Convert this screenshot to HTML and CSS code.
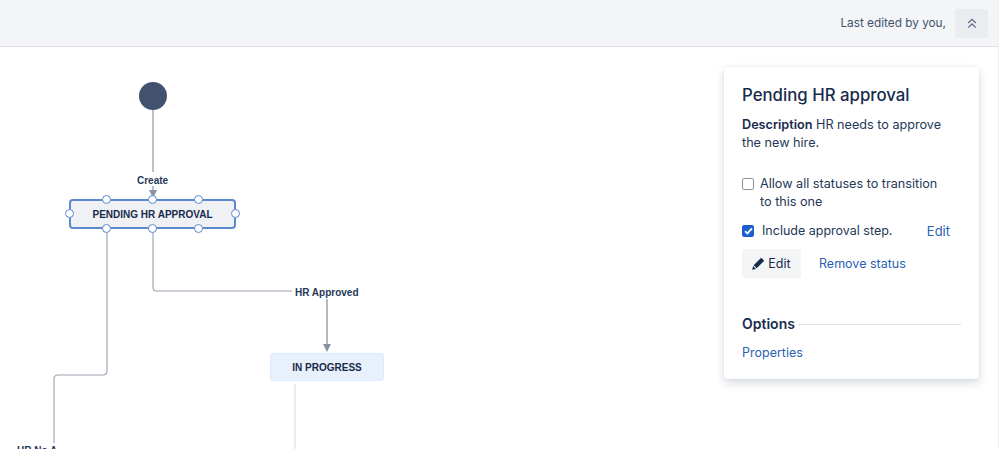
FILE: index.html
```html
<!DOCTYPE html>
<html lang="en">
<head>
<meta charset="utf-8">
<title>Workflow</title>
<link rel="stylesheet" href="styles.css">
</head>
<body>
<header class="topbar">
  <span class="edited">Last edited by you,</span>
  <button class="collapse" aria-label="Collapse">
    <svg width="10" height="11" viewBox="0 0 10 11" fill="none" stroke="#5e6c84" stroke-width="1.3"><path d="M1.2 5 5 1.4 8.8 5M1.2 9.6 5 6 8.8 9.6"/></svg>
  </button>
</header>
<main class="canvas">
  <svg class="wires" width="999" height="402" viewBox="0 47 999 402" fill="none">
    <path class="wire" d="M153 109V172"/>
    <path class="wire" d="M153 186V192"/>
    <path class="head" d="M149 190H157L153 198Z"/>
    <path class="wire thin" d="M153 228V287.500Q153 291 156.500 291H292"/>
    <path class="wire bold" d="M327 299V345"/>
    <path class="head" d="M323 344H331L327 352Z"/>
    <path class="wire thin" d="M107 228V371Q107 375 103 375H58Q54 375 54 379V443"/>
    <path class="wire pale" d="M295 384V449"/>
  </svg>
  <div class="start"></div>
  <span class="label create">Create</span>
  <span class="label approved">HR Approved</span>
  <span class="label rejected">HR No A</span>
  <div class="status selected">PENDING HR APPROVAL
    <i class="handle h1"></i><i class="handle h2"></i><i class="handle h3"></i>
    <i class="handle h4"></i><i class="handle h5"></i><i class="handle h6"></i>
    <i class="handle h7"></i><i class="handle h8"></i>
  </div>
  <div class="status progress">IN PROGRESS</div>

  <aside class="panel">
    <h2 class="title">Pending HR approval</h2>
    <p class="desc"><b>Description</b> HR needs to approve the new hire.</p>
    <label class="check-row first">
      <span class="box"></span>
      <span>Allow all statuses to transition to this one</span>
    </label>
    <div class="check-row second">
      <span class="box on">
        <svg width="9" height="8" viewBox="0 0 9 8" fill="none" stroke="#fff" stroke-width="1.8"><path d="M1 4.200 3.400 6.400 8 1.400"/></svg>
      </span>
      <span class="step">Include approval step.</span>
      <a class="link edit-link" href="#">Edit</a>
    </div>
    <div class="actions">
      <button class="edit">
        <svg width="13" height="13" viewBox="0 0 13 13" fill="#172b4d"><path d="M9.200.8 12.200 3.800 4.700 11.300 1.700 8.300ZM1.100 9 4 11.900.2 12.800Z"/></svg>
        Edit
      </button>
      <a class="link" href="#">Remove status</a>
    </div>
    <div class="options"><h3>Options</h3><span class="rule"></span></div>
    <a class="link" href="#">Properties</a>
  </aside>
</main>
</body>
</html>
```

FILE: styles.css
```css
* { box-sizing: border-box; }
html, body { margin: 0; height: 100%; overflow: hidden; }
body {
  background: #fff;
  font-family: Inter, "Liberation Sans", sans-serif;
  color: #253858;
  font-size: 12.500px;
  border-right: 1px solid #f1f2f4;
}
.topbar {
  height: 47px;
  background: #f4f5f7;
  border-bottom: 1px solid #dfe1e6;
  display: flex;
  align-items: center;
  justify-content: flex-end;
  gap: 9px;
  padding: 0 10px 0 0;
}
.edited { font-size: 11.800px; color: #42526e; }
.collapse {
  width: 33px;
  height: 29px;
  border: 0;
  border-radius: 3px;
  background: #ebecf0;
  display: flex;
  align-items: center;
  justify-content: center;
  padding: 0;
}
.canvas { position: relative; height: 402px; }
.wires { position: absolute; left: 0; top: 0; }
.wire { stroke: #a5adba; stroke-width: 1.5; }
.wire.bold { stroke: #b3b9c4; stroke-width: 2; }
.wire.thin { stroke: #97a0af; stroke-width: 1.1; }
.wire.pale { stroke: #dfe1e6; stroke-width: 1.2; }
.head { fill: #8993a4; }
.start {
  position: absolute;
  left: 139px;
  top: 35px;
  width: 28px;
  height: 28px;
  border-radius: 50%;
  background: #42526e;
}
.label {
  position: absolute;
  font: bold 10px/14px "Liberation Sans", sans-serif;
  color: #253858;
  white-space: nowrap;
}
.create { left: 137px; top: 127px; }
.approved { left: 295px; top: 239px; }
.rejected { left: 17px; top: 397px; }
.status {
  position: absolute;
  display: flex;
  align-items: center;
  justify-content: center;
  padding-top: 1px;
  font: bold 10px/14px "Liberation Sans", sans-serif;
  border-radius: 3px;
  color: #172b4d;
}
.selected {
  left: 69px;
  top: 152px;
  width: 167px;
  height: 30px;
  background: #f0f1f4;
  border: 2px solid #5b8ad0;
  border-radius: 4px;
}
.progress {
  left: 270px;
  top: 306px;
  width: 114px;
  height: 28px;
  background: #e8f0fb;
  border: 1px solid #deebff;
  color: #172b4d;
}
.handle {
  position: absolute;
  width: 9px;
  height: 9px;
  border-radius: 50%;
  background: #fff;
  border: 1px solid #5b8ad0;
}
.h1, .h2, .h3 { top: -6px; }
.h6, .h7, .h8 { bottom: -6px; }
.h1, .h6 { left: 31px; }
.h2, .h7 { left: 77px; }
.h3, .h8 { left: 123px; }
.h4 { left: -6px; top: 8px; }
.h5 { right: -6px; top: 8px; }
.panel {
  position: absolute;
  left: 724px;
  top: 20px;
  width: 255px;
  height: 312px;
  padding: 18px 18px 0;
  background: #fff;
  border-radius: 3px;
  box-shadow: 0 4px 10px rgba(9, 30, 66, .16), 0 0 2px rgba(9, 30, 66, .12);
}
.title {
  margin: 0;
  font-size: 16.800px;
  line-height: 20px;
  font-weight: 500;
  color: #172b4d;
}
.desc { margin: 11px 0 0; line-height: 18px; width: 215px; font-size: 12.650px; }
.desc b { font-weight: 600; color: #172b4d; }
.check-row { display: flex; }
.first { margin-top: 23px; gap: 6px; line-height: 18px; width: 200px; font-size: 12.650px; }
.box {
  flex: none;
  width: 12px;
  height: 12px;
  margin-top: 3px;
  border: 1px solid #8a8f98;
  border-radius: 2px;
  background: #fff;
  display: flex;
  align-items: center;
  justify-content: center;
}
.second { margin-top: 11px; align-items: center; line-height: 18px; }
.box.on { margin-top: 0; background: #1d5fd1; border-color: #1d5fd1; }
.step { margin-left: 8px; flex: 1; }
.link { color: #2b5fb3; text-decoration: none; }
.edit-link { margin-right: 11px; font-size: 13px; }
.actions { display: flex; align-items: center; gap: 18px; margin-top: 9px; }
.edit {
  width: 59px;
  height: 29px;
  border: 0;
  border-radius: 3px;
  background: #f4f5f7;
  display: flex;
  align-items: center;
  justify-content: center;
  gap: 3px;
  padding: 0;
  font: inherit;
  color: #172b4d;
}
.options { display: flex; align-items: center; gap: 3px; margin-top: 36px; margin-bottom: 11px; }
.options h3 { margin: 0; font-size: 14px; line-height: 20px; font-weight: 600; color: #172b4d; }
.rule { flex: 1; height: 1px; background: #dfe1e6; }
```
